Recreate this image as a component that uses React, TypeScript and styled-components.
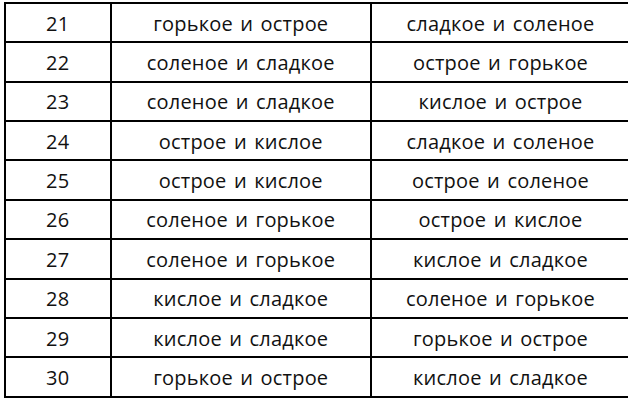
import React from "react";
import styled, { createGlobalStyle } from "styled-components";

const GlobalStyle = createGlobalStyle`
  html, body {
    margin: 0;
    padding: 0;
    background: #ffffff;
  }
`;

const Page = styled.div`
  padding: 2px 0 0 4px;
`;

const Table = styled.table`
  width: 619px;
  border-collapse: collapse;
  table-layout: fixed;
  font-family: "Open Sans", "DejaVu Sans", sans-serif;
  font-size: 20px;
  color: #111;
`;

const Row = styled.tr`
  height: 39.37px;
`;

const Cell = styled.td<{ $w: number }>`
  width: ${(p) => p.$w}px;
  border: 2px solid #000;
  text-align: center;
  vertical-align: middle;
  padding: 2px 0 0;
  line-height: 1;
  letter-spacing: 0.2px;
  word-spacing: 2px;
`;

const rows: [number, string, string][] = [
  [21, "горькое и острое", "сладкое и соленое"],
  [22, "соленое и сладкое", "острое и горькое"],
  [23, "соленое и сладкое", "кислое и острое"],
  [24, "острое и кислое", "сладкое и соленое"],
  [25, "острое и кислое", "острое и соленое"],
  [26, "соленое и горькое", "острое и кислое"],
  [27, "соленое и горькое", "кислое и сладкое"],
  [28, "кислое и сладкое", "соленое и горькое"],
  [29, "кислое и сладкое", "горькое и острое"],
  [30, "горькое и острое", "кислое и сладкое"],
];

const App: React.FC = () => (
  <Page>
    <GlobalStyle />
    <Table>
      <tbody>
        {rows.map(([n, a, b]) => (
          <Row key={n}>
            <Cell $w={103.5}>{n}</Cell>
            <Cell $w={258.5}>{a}</Cell>
            <Cell $w={257}>{b}</Cell>
          </Row>
        ))}
      </tbody>
    </Table>
  </Page>
);

export default App;
